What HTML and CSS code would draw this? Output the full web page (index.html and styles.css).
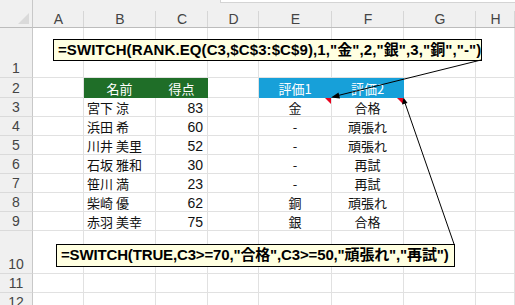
FILE: index.html
```html
<!DOCTYPE html>
<html lang="ja">
<head>
<meta charset="utf-8">
<link rel="stylesheet" href="styles.css">
</head>
<body>
<div class="page">
  <div class="topstrip"></div>
  <div class="sheet">
    <div class="corner"><span class="tri"></span></div>
    <div class="ch">A</div><div class="ch">B</div><div class="ch">C</div><div class="ch">D</div><div class="ch">E</div><div class="ch">F</div><div class="ch">G</div><div class="ch">H</div>

    <div class="rh tall">1</div>
    <div class="c"></div><div class="c"></div><div class="c"></div><div class="c"></div><div class="c"></div><div class="c"></div><div class="c"></div><div class="c"></div>

    <div class="rh">2</div>
    <div class="c"></div><div class="c g mid">名前</div><div class="c g mid">得点</div><div class="c"></div><div class="c b mid">評価1</div><div class="c b mid">評価2</div><div class="c"></div><div class="c"></div>

    <div class="rh">3</div>
    <div class="c"></div><div class="c name">宮下 涼</div><div class="c num">83</div><div class="c"></div><div class="c mid note">金<span class="red"></span></div><div class="c mid note">合格<span class="red"></span></div><div class="c"></div><div class="c"></div>

    <div class="rh">4</div>
    <div class="c"></div><div class="c name">浜田 希</div><div class="c num">60</div><div class="c"></div><div class="c mid">-</div><div class="c mid">頑張れ</div><div class="c"></div><div class="c"></div>

    <div class="rh">5</div>
    <div class="c"></div><div class="c name">川井 美里</div><div class="c num">52</div><div class="c"></div><div class="c mid">-</div><div class="c mid">頑張れ</div><div class="c"></div><div class="c"></div>

    <div class="rh">6</div>
    <div class="c"></div><div class="c name">石坂 雅和</div><div class="c num">30</div><div class="c"></div><div class="c mid">-</div><div class="c mid">再試</div><div class="c"></div><div class="c"></div>

    <div class="rh">7</div>
    <div class="c"></div><div class="c name">笹川 満</div><div class="c num">23</div><div class="c"></div><div class="c mid">-</div><div class="c mid">再試</div><div class="c"></div><div class="c"></div>

    <div class="rh">8</div>
    <div class="c"></div><div class="c name">柴崎 優</div><div class="c num">62</div><div class="c"></div><div class="c mid">銅</div><div class="c mid">頑張れ</div><div class="c"></div><div class="c"></div>

    <div class="rh">9</div>
    <div class="c"></div><div class="c name">赤羽 美幸</div><div class="c num">75</div><div class="c"></div><div class="c mid">銀</div><div class="c mid">合格</div><div class="c"></div><div class="c"></div>

    <div class="rh tall">10</div>
    <div class="c"></div><div class="c"></div><div class="c"></div><div class="c"></div><div class="c"></div><div class="c"></div><div class="c"></div><div class="c"></div>

    <div class="rh">11</div>
    <div class="c"></div><div class="c"></div><div class="c"></div><div class="c"></div><div class="c"></div><div class="c"></div><div class="c"></div><div class="c"></div>

    <div class="rh">12</div>
    <div class="c"></div><div class="c"></div><div class="c"></div><div class="c"></div><div class="c"></div><div class="c"></div><div class="c"></div><div class="c"></div>
  </div>

  <div class="formula f1">=SWITCH(RANK.EQ(C3,$C$3:$C$9),1,"金",2,"銀",3,"銅","-")</div>
  <div class="formula f2">=SWITCH(TRUE,C3&gt;=70,"合格",C3&gt;=50,"頑張れ","再試")</div>

  <svg class="arrows" width="515" height="305" viewBox="0 0 515 305">
    <line x1="481" y1="60" x2="336" y2="96" stroke="#000" stroke-width="1"/>
    <polygon points="331,97.5 338.5,92.5 340,98.5" fill="#000"/>
    <line x1="454" y1="244" x2="405" y2="103" stroke="#000" stroke-width="1"/>
    <polygon points="403.5,97.5 402,104.5 407.5,103" fill="#000"/>
  </svg>
</div>
</body>
</html>
```

FILE: styles.css
```css
* { box-sizing: border-box; }
html, body { margin: 0; padding: 0; background: #fff; }
body { width: 515px; height: 305px; overflow: hidden; }

.page { position: relative; width: 515px; height: 305px; overflow: hidden; }

.topstrip {
  position: absolute; left: 220px; top: 0; right: 0; height: 3px;
  background: #fff; border-bottom: 1px solid #d4d4d4; border-left: 1px solid #d4d4d4;
  z-index: 2;
}

.sheet {
  display: grid;
  grid-template-columns: 33px 51px 72px 52px 51px 73px 72px 72px 1fr;
  grid-template-rows: 28px 50px 20px repeat(7, 19px) 43px 19px 19px;
  font-family: "Noto Sans CJK JP", "Noto Sans", sans-serif;
  font-size: 13px;
  color: #111;
}

.corner {
  position: relative;
  background: #f0f0f0;
  border-right: 1px solid #c8c8c8;
  border-bottom: 1px solid #bcbcbc;
}
.tri {
  position: absolute; right: 3px; bottom: 3px;
  width: 0; height: 0;
  border-left: 11px solid transparent;
  border-bottom: 11px solid #dadada;
}

.ch {
  position: relative;
  background: #f0f0f0;
  border-bottom: 1px solid #bcbcbc;
  display: flex; align-items: center; justify-content: center;
  padding-top: 11px;
  font-family: "Liberation Sans", Arial, sans-serif;
  font-size: 14px;
  color: #444;
}
.ch::after {
  content: ""; position: absolute; right: 0; top: 11px; bottom: 0;
  width: 1px; background: #d6d6d6;
}

.rh {
  background: #f0f0f0;
  border-right: 1px solid #c8c8c8;
  border-bottom: 1px solid #dadada;
  display: flex; align-items: center; justify-content: center;
  font-family: "Liberation Sans", Arial, sans-serif;
  font-size: 14px;
  color: #444;
}
.rh.tall { align-items: flex-end; padding-bottom: 1px; }

.c {
  position: relative;
  border-right: 1px solid #e1e1e1;
  border-bottom: 1px solid #e1e1e1;
  display: flex; align-items: center;
  white-space: nowrap;
  line-height: 1;
  padding-top: 1px;
}
.mid { justify-content: center; }
.name { padding-left: 3px; }
.num { justify-content: flex-end; padding-right: 4px; font-family: "Liberation Sans", Arial, sans-serif; font-size: 14px; }

.g { background: #1f6e28; border-color: #1f6e28; color: #fff; }
.b { background: #17a0d9; border-color: #17a0d9; color: #fff; }

.red {
  position: absolute; right: 0; top: 0;
  width: 0; height: 0;
  border-left: 6px solid transparent;
  border-top: 6px solid #e8001c;
}

.formula {
  position: absolute;
  background: #ffffe1;
  border: 1px solid #000;
  font-family: "Liberation Sans", "Noto Sans CJK JP", sans-serif;
  font-weight: bold;
  font-size: 15px;
  letter-spacing: 0.1px;
  line-height: 20px;
  padding-left: 4px;
  white-space: nowrap;
  color: #000;
  z-index: 3;
}
.f1 { left: 53px; top: 39px; width: 429px; height: 22px; }
.f2 { left: 56px; top: 244px; width: 399px; height: 23px; letter-spacing: -0.15px; }

.arrows { position: absolute; left: 0; top: 0; z-index: 4; pointer-events: none; }
```
